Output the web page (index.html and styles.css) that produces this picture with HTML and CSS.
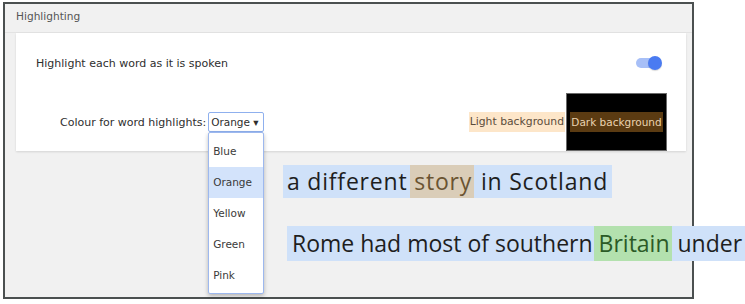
FILE: index.html
```html
<!DOCTYPE html>
<html>
<head>
<meta charset="utf-8">
<link rel="stylesheet" href="styles.css">
</head>
<body>
<div class="frame">
  <div class="header">Highlighting</div>
  <div class="card">
    <div class="row row-top">
      <span class="label">Highlight each word as it is spoken</span>
      <span class="toggle"><span class="track"></span><span class="knob"></span></span>
    </div>
    <div class="row row-colour">
      <span class="label">Colour for word highlights:</span>
      <div class="select">
        <span class="select-value">Orange ▾</span>
        <ul class="options">
          <li>Blue</li>
          <li class="selected">Orange</li>
          <li>Yellow</li>
          <li>Green</li>
          <li>Pink</li>
        </ul>
      </div>
      <span class="spacer"></span>
      <span class="sample-light">Light background</span>
      <div class="dark-box"><span class="sample-dark">Dark background</span></div>
    </div>
  </div>
  <div class="samples">
    <div class="line line-1">a different <span class="hl-orange">story</span> in Scotland</div>
    <div class="line line-2">Rome had most of southern <span class="hl-green">Britain</span> under</div>
  </div>
</div>
</body>
</html>
```

FILE: styles.css
```css
html, body {
  margin: 0;
  padding: 0;
  background: #ffffff;
}

body {
  font-family: "DejaVu Sans", "Open Sans", sans-serif;
}

.frame {
  margin: 2px 0 0 3px;
  width: 691px;
  height: 297px;
  box-sizing: border-box;
  border: 2px solid #4b5050;
  background: #f1f1f1;
}

.header {
  height: 29px;
  box-sizing: border-box;
  padding: 6px 0 0 11px;
  font-size: 10.6px;
  color: #555555;
  border-bottom: 1px solid #e3e3e3;
}

.card {
  margin: 0 6px 0 11px;
  height: 118px;
  background: #ffffff;
  box-shadow: 0 1px 2px rgba(0, 0, 0, 0.12);
  display: flex;
  flex-direction: column;
}

.row {
  display: flex;
  align-items: center;
}

.row-top {
  height: 60px;
  padding: 0 24px 0 20px;
  justify-content: space-between;
}

.label {
  font-size: 11px;
  color: #2e2e2e;
}

.toggle {
  position: relative;
  width: 26px;
  height: 14px;
  display: inline-block;
}

.track {
  position: absolute;
  left: 0;
  top: 2px;
  width: 22px;
  height: 10px;
  border-radius: 5px;
  background: #a7bff7;
}

.knob {
  position: absolute;
  right: 0;
  top: 0;
  width: 14px;
  height: 14px;
  border-radius: 50%;
  background: #4a7bf1;
  box-shadow: 0 1px 1px rgba(0, 0, 0, 0.15);
}

.row-colour {
  height: 58px;
  padding: 0 19px 0 44px;
}

.row-colour .label {
  margin-right: 2px;
}

.select {
  position: relative;
  width: 56px;
  height: 20px;
  box-sizing: border-box;
  border: 1px solid #8fb0ee;
  border-radius: 2px;
  display: flex;
  align-items: center;
  padding-left: 2px;
  font-size: 10.5px;
  color: #2e2e2e;
  white-space: nowrap;
}

.options {
  position: absolute;
  left: -1px;
  top: 19px;
  width: 56px;
  box-sizing: border-box;
  margin: 0;
  padding: 3px 0 2px;
  list-style: none;
  background: #ffffff;
  border: 1px solid #9db8ee;
  border-radius: 2px;
  box-shadow: 0 2px 4px rgba(0, 0, 0, 0.25);
  z-index: 2;
}

.options li {
  height: 31px;
  line-height: 31px;
  padding-left: 4px;
  font-size: 10.5px;
  color: #3a3a3a;
}

.options li.selected {
  background: #d3e3fb;
}

.spacer {
  flex: 1;
}

.sample-light {
  height: 20px;
  line-height: 20px;
  padding: 0 1px;
  font-size: 10.8px;
  color: #5b4c3a;
  background: #fde6c9;
  white-space: nowrap;
}

.dark-box {
  width: 101px;
  height: 58px;
  box-sizing: border-box;
  border: 1px solid #6a6a6a;
  background: #000000;
  display: flex;
  align-items: center;
  justify-content: center;
  margin-left: 1px;
}

.sample-dark {
  height: 20px;
  line-height: 20px;
  padding: 0 1px;
  font-size: 10.5px;
  color: #ead3b0;
  background: #5b3b12;
  white-space: nowrap;
}

.samples {
  display: flex;
  flex-direction: column;
  align-items: flex-start;
}

.line {
  font-family: "Open Sans", "Liberation Sans", sans-serif;
  font-size: 23px;
  color: #1e1e1e;
  background: #cfe1f9;
  white-space: nowrap;
}

.line-1 {
  margin: 14px 0 0 278px;
  height: 33px;
  line-height: 33px;
  padding: 0 4px 0 4px;
  letter-spacing: 0.8px;
}

.line-2 {
  margin: 28px 0 0 282px;
  height: 35px;
  line-height: 35px;
  padding: 0 4px 0 5px;
}

.hl-orange {
  background: #dacdb8;
  color: #6a5432;
  display: inline-block;
  padding: 0 2px 0 4px;
  margin-left: -4px;
}

.hl-green {
  background: #b3e1ae;
  color: #2b5a27;
  display: inline-block;
  padding: 0 2px 0 5px;
  margin-left: -5px;
}
```
